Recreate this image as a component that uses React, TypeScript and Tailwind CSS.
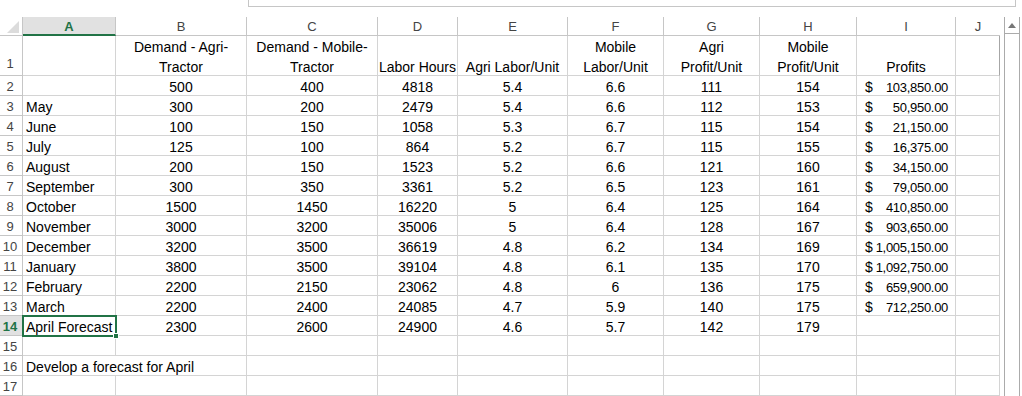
import React from 'react';

const COLS = ['A', 'B', 'C', 'D', 'E', 'F', 'G', 'H', 'I', 'J'];

const HEADERS: string[][] = [
  [],
  ['Demand - Agri-', 'Tractor'],
  ['Demand - Mobile-', 'Tractor'],
  ['Labor Hours'],
  ['Agri Labor/Unit'],
  ['Mobile', 'Labor/Unit'],
  ['Agri', 'Profit/Unit'],
  ['Mobile', 'Profit/Unit'],
  ['Profits'],
  [],
];

type Row = [string, string, string, string, string, string, string, string, string];

const ROWS: Row[] = [
  ['', '500', '400', '4818', '5.4', '6.6', '111', '154', '103,850.00'],
  ['May', '300', '200', '2479', '5.4', '6.6', '112', '153', '50,950.00'],
  ['June', '100', '150', '1058', '5.3', '6.7', '115', '154', '21,150.00'],
  ['July', '125', '100', '864', '5.2', '6.7', '115', '155', '16,375.00'],
  ['August', '200', '150', '1523', '5.2', '6.6', '121', '160', '34,150.00'],
  ['September', '300', '350', '3361', '5.2', '6.5', '123', '161', '79,050.00'],
  ['October', '1500', '1450', '16220', '5', '6.4', '125', '164', '410,850.00'],
  ['November', '3000', '3200', '35006', '5', '6.4', '128', '167', '903,650.00'],
  ['December', '3200', '3500', '36619', '4.8', '6.2', '134', '169', '1,005,150.00'],
  ['January', '3800', '3500', '39104', '4.8', '6.1', '135', '170', '1,092,750.00'],
  ['February', '2200', '2150', '23062', '4.8', '6', '136', '175', '659,900.00'],
  ['March', '2200', '2400', '24085', '4.7', '5.9', '140', '175', '712,250.00'],
  ['April Forecast', '2300', '2600', '24900', '4.6', '5.7', '142', '179', ''],
];

const cell = 'border-r border-b border-[#d4d4d4] h-[20px] leading-[23px] whitespace-nowrap';

function RowHead({ n, active }: { n: number; active?: boolean }) {
  return (
    <div
      className={`h-[20px] leading-[22px] text-center pr-[2px] border-r border-b border-[#c6c6c6] text-[13px] ${
        active ? 'bg-[#e1e1e1] text-[#217346] font-bold' : 'text-[#444]'
      }`}
    >
      {n}
    </div>
  );
}

function DataRow({ n, row }: { n: number; row: Row }) {
  const selected = n === 14;
  return (
    <>
      <RowHead n={n} active={selected} />
      <div className={`${cell} pl-[3px] relative`}>
        {row[0]}
        {selected && (
          <div className="absolute -left-px -top-px w-[95px] h-[22px] border-2 border-[#217346]">
            <div className="absolute -right-[4px] -bottom-[4px] w-[6px] h-[6px] bg-[#217346] border border-white" />
          </div>
        )}
      </div>
      {row.slice(1, 8).map((v, i) => (
        <div key={i} className={`${cell} text-center`}>
          {v}
        </div>
      ))}
      <div className={`${cell} flex justify-between pl-[8px] pr-[7px]`}>
        {row[8] && (
          <>
            <span>$</span>
            <span className="text-[13px] tracking-[-0.3px]">{row[8]}</span>
          </>
        )}
      </div>
      <div className={cell} />
    </>
  );
}

function EmptyRow({ n, text }: { n: number; text?: string }) {
  return (
    <>
      <RowHead n={n} />
      <div
        className={`${text ? 'border-b border-[#d4d4d4] h-[20px] leading-[23px] whitespace-nowrap relative z-10' : cell} pl-[3px]`}
      >
        {text}
      </div>
      {COLS.slice(1).map((c) => (
        <div key={c} className={cell} />
      ))}
    </>
  );
}

export default function App() {
  return (
    <div className="w-[1022px] h-[396px] overflow-hidden bg-white text-black text-[14px] font-['Liberation_Sans',Arial,sans-serif]">
      {/* formula bar edge */}
      <div className="h-[17px]">
        <div className="ml-[248px] w-[768px] h-[7px] border-x border-b border-[#c6c6c6]" />
      </div>

      <div className="flex">
        <div className="w-[1000px] grid grid-cols-[23px_93px_131px_131px_80px_110px_96px_96px_97px_99px_44px]">
          {/* corner */}
          <div className="h-[19px] border-r border-b border-[#c6c6c6] flex items-end justify-end pr-[3px] pb-[2px]">
            <svg width="12" height="12" viewBox="0 0 12 12">
              <polygon points="12,0 12,12 0,12" fill="#dcdcdc" />
            </svg>
          </div>
          {COLS.map((c, i) => (
            <div
              key={c}
              className={`h-[19px] leading-[19px] text-center text-[13px] ${
                i === 0
                  ? 'bg-[#e1e1e1] text-[#217346] font-bold border-b-2 border-b-[#217346] border-r border-r-[#c6c6c6]'
                  : i === 9
                    ? 'text-[#444] border-b border-[#c6c6c6]'
                    : 'text-[#444] border-r border-b border-[#c6c6c6]'
              }`}
            >
              {c}
            </div>
          ))}

          {/* row 1: wrapped headers */}
          <div className="h-[40px] flex items-end justify-center pr-[2px] leading-[22px] border-r border-b border-[#c6c6c6] text-[13px] text-[#444]">
            1
          </div>
          {HEADERS.map((lines, i) => (
            <div
              key={i}
              className={`h-[40px] flex flex-col justify-end items-center leading-[20px] border-b border-[#d4d4d4] ${
                i === 9 ? 'border-r border-r-[#a6a6a6]' : 'border-r'
              } border-[#d4d4d4]`}
            >
              <div className="flex flex-col items-center translate-y-[2px]">
                {lines.map((l) => (
                  <span key={l} className="whitespace-nowrap">
                    {l}
                  </span>
                ))}
              </div>
            </div>
          ))}

          {ROWS.map((r, i) => (
            <DataRow key={i} n={i + 2} row={r} />
          ))}
          <EmptyRow n={15} />
          <EmptyRow n={16} text="Develop a forecast for April" />
          <EmptyRow n={17} />
        </div>

        {/* vertical scrollbar */}
        <div className="ml-[4px] w-[16px] h-[379px] border-x border-[#ababab] bg-white">
          <div className="h-[17px] border-b border-[#ababab] flex items-center justify-center">
            <svg width="8" height="5" viewBox="0 0 8 5">
              <polygon points="4,0 8,5 0,5" fill="#777" />
            </svg>
          </div>
        </div>
      </div>
    </div>
  );
}
